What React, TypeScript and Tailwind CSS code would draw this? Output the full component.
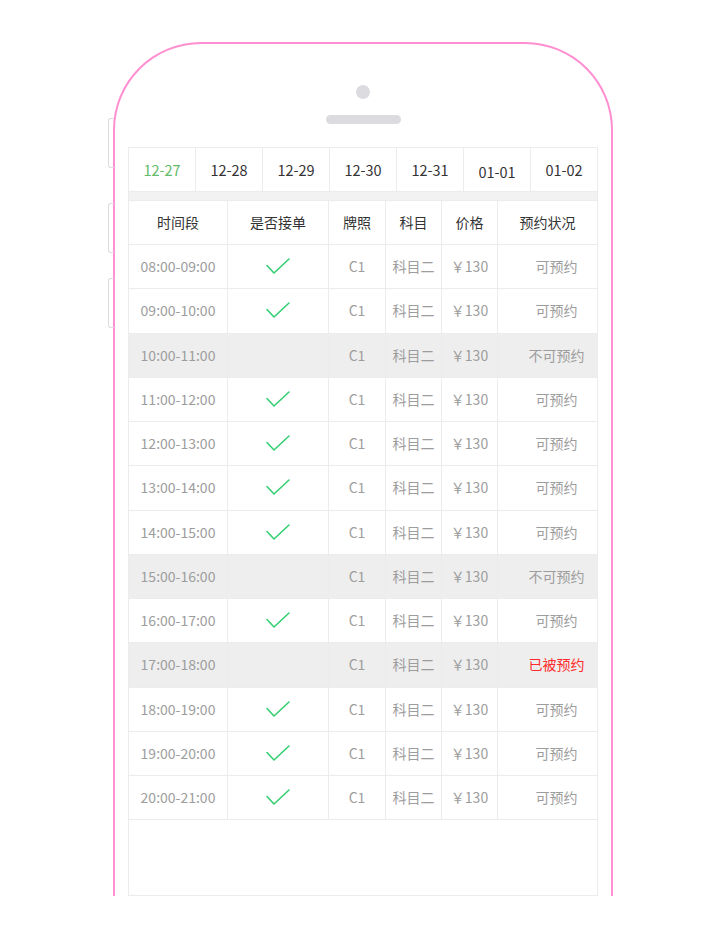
const dates = ["12-27", "12-28", "12-29", "12-30", "12-31", "01-01", "01-02"];

type Slot = { time: string; open: boolean; status: string };

const slots: Slot[] = [
  { time: "08:00-09:00", open: true, status: "可预约" },
  { time: "09:00-10:00", open: true, status: "可预约" },
  { time: "10:00-11:00", open: false, status: "不可预约" },
  { time: "11:00-12:00", open: true, status: "可预约" },
  { time: "12:00-13:00", open: true, status: "可预约" },
  { time: "13:00-14:00", open: true, status: "可预约" },
  { time: "14:00-15:00", open: true, status: "可预约" },
  { time: "15:00-16:00", open: false, status: "不可预约" },
  { time: "16:00-17:00", open: true, status: "可预约" },
  { time: "17:00-18:00", open: false, status: "已被预约" },
  { time: "18:00-19:00", open: true, status: "可预约" },
  { time: "19:00-20:00", open: true, status: "可预约" },
  { time: "20:00-21:00", open: true, status: "可预约" },
];

const cols = "grid grid-cols-[98px_101px_57px_56px_56px_100px]";

function Check() {
  return (
    <svg width="24" height="17" viewBox="0 0 24 17" fill="none">
      <path d="M1 7.5 L8 15 L23 1" stroke="#34cf72" strokeWidth="1.6" strokeLinecap="round" strokeLinejoin="round" />
    </svg>
  );
}

export default function App() {
  return (
    <div className="h-[937px] w-[720px] overflow-hidden bg-white pt-[42px] font-['Noto_Sans_CJK_SC','Noto_Sans',sans-serif]">
      <div className="relative ml-[113px] h-[854px] w-[500px]">
        {/* side buttons */}
        <div className="absolute left-[-5px] top-[76px] h-[50px] w-[6px] rounded-l-[3px] border border-r-0 border-[#dcdcdc]" />
        <div className="absolute left-[-5px] top-[161px] h-[50px] w-[6px] rounded-l-[3px] border border-r-0 border-[#dcdcdc]" />
        <div className="absolute left-[-5px] top-[236px] h-[50px] w-[6px] rounded-l-[3px] border border-r-0 border-[#dcdcdc]" />

        <div className="flex h-full flex-col items-center rounded-t-[88px] border-2 border-b-0 border-[#ff8fd0] bg-white">
          <div className="mt-[41px] h-[14px] w-[14px] rounded-full bg-[#dcdce0]" />
          <div className="mt-[16px] h-[9px] w-[75px] rounded-full bg-[#dcdce0]" />

          <div className="mt-[23px] flex w-[470px] flex-1 flex-col border border-[#ececec]">
            <div className="flex h-[43px]">
              {dates.map((d, i) => (
                <div
                  key={d}
                  className={
                    "flex flex-1 items-center justify-center text-[14.5px] " +
                    (i > 0 ? "border-l border-[#ececec] " : "") +
                    (i === 0 ? "text-[#62bb66]" : "text-[#333333]") +
                    (d === "01-01" ? " pt-[4px]" : "")
                  }
                >
                  {d}
                </div>
              ))}
            </div>
            <div className="h-[10px] border-y border-[#ececec] bg-[#f2f2f2]" />

            <div className={cols + " h-[44px] border-b border-[#ececec] text-[14px] text-[#333333]"}>
              <div className="flex items-center justify-center">时间段</div>
              <div className="flex items-center justify-center border-l border-[#ececec]">是否接单</div>
              <div className="flex items-center justify-center border-l border-[#ececec]">牌照</div>
              <div className="flex items-center justify-center border-l border-[#ececec]">科目</div>
              <div className="flex items-center justify-center border-l border-[#ececec]">价格</div>
              <div className="flex items-center justify-center border-l border-[#ececec]">预约状况</div>
            </div>

            {slots.map((s) => (
              <div
                key={s.time}
                className={
                  cols +
                  " h-[44.25px] border-b border-[#ececec] text-[14px] text-[#9d9d9d] " +
                  (s.open ? "bg-white" : "bg-[#eeeeee]")
                }
              >
                <div className="flex items-center justify-center">{s.time}</div>
                <div className="flex items-center justify-center border-l border-[#ececec]">
                  {s.open && <Check />}
                </div>
                <div className="flex items-center justify-center border-l border-[#ececec]">C1</div>
                <div className="flex items-center justify-center border-l border-[#ececec]">科目二</div>
                <div className="flex items-center justify-center border-l border-[#ececec]">￥130</div>
                <div
                  className={
                    "flex items-center justify-center border-l border-[#ececec] pl-[18px] " +
                    (s.status === "已被预约" ? "text-[#ff2a2a]" : "")
                  }
                >
                  {s.status}
                </div>
              </div>
            ))}
          </div>
        </div>
      </div>
    </div>
  );
}
